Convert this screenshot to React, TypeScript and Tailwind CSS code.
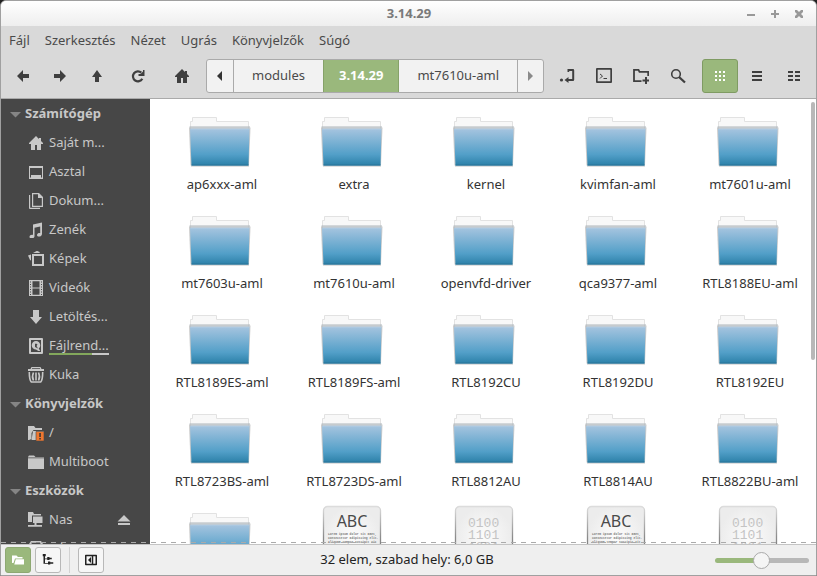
import { useState, ReactNode } from "react";

type IconProps = {
  children: ReactNode;
  className?: string;
}

const Icon = ({ children, className = "size-4" }: IconProps) => (
  <svg viewBox="0 0 16 16" fill="currentColor" className={`${className} shrink-0`} aria-hidden="true">
    {children}
  </svg>
)

const MENU = ["Fájl", "Szerkesztés", "Nézet", "Ugrás", "Könyvjelzők", "Súgó"]

const FOLDERS = [
  "ap6xxx-aml", "extra", "kernel", "kvimfan-aml", "mt7601u-aml",
  "mt7603u-aml", "mt7610u-aml", "openvfd-driver", "qca9377-aml", "RTL8188EU-aml",
  "RTL8189ES-aml", "RTL8189FS-aml", "RTL8192CU", "RTL8192DU", "RTL8192EU",
  "RTL8723BS-aml", "RTL8723DS-aml", "RTL8812AU", "RTL8814AU", "RTL8822BU-aml",
]

const HomeIcon = () => (
  <Icon>
    <path d="M8 1 1 8v1h2v6h4v-5h2v5h4V9h2V8l-2-2V3h-2v1z" />
  </Icon>
)

const DesktopIcon = () => (
  <Icon>
    <path fillRule="evenodd" d="M1 2h14v13H1zM2 4v9.500h1V11h10v2.500h1V4z" />
  </Icon>
)

const DocumentsIcon = () => (
  <Icon>
    <path fillRule="evenodd" d="M4 0h7l4 4v10H4zM5.200 1.200v11.600h8.600V5H10V1.200z" />
    <path d="M1 2h1.200v12.800H12V16H2q-1 0-1-1z" />
  </Icon>
)

const MusicIcon = () => (
  <Icon>
    <path d="M5 2.500 14 .5V12c0 3-5 3.500-5 1 0-1.800 2-2.300 3.200-2V4.500L6.500 5.700V14c0 3-5 3.200-5 1 0-1.800 2-2.500 3.500-2z" />
  </Icon>
)

const PicturesIcon = () => (
  <Icon>
    <path fillRule="evenodd" d="M4 3h12v12H4zM6 5v8h8V5z" />
    <path d="M5 2h7l-1-1.500h-1L9.500-.5zM0 4.500l3-1v6L2 9z" />
  </Icon>
)

const VideosIcon = () => (
  <Icon>
    <path fillRule="evenodd" d="M1 0h14v16H1zM4.500 1.200v6.200h7V1.200zM4.500 8.600v6.200h7V8.600zM2 1.500v1h1v-1zM2 4v1h1V4zM2 6.500v1h1v-1zM2 9v1h1V9zM2 11.500v1h1v-1zM2 14v1h1v-1zM13 1.500v1h1v-1zM13 4v1h1V4zM13 6.500v1h1v-1zM13 9v1h1V9zM13 11.500v1h1v-1zM13 14v1h1v-1z" />
  </Icon>
)

const DownloadsIcon = () => (
  <Icon>
    <path d="M5 1h6v7h3l-6 7-6-7h3z" />
  </Icon>
)

const DiskIcon = () => (
  <Icon>
    <path fillRule="evenodd" d="M2 0h12q1 0 1 1v14q0 1-1 1H2q-1 0-1-1V1q0-1 1-1zM3 2v12h10V2z" />
    <path fillRule="evenodd" d="M8 3a4.300 4.300 0 0 1 4.300 4.300c0 1.500-.6 2.500-1.600 3.200l1.600 2.500h-2L8 11.600A4.300 4.300 0 1 1 8 3zM7 6v3l3 1.500L8.500 8 9.500 6.500 8 5.500z" />
  </Icon>
)

const TrashIcon = () => (
  <Icon>
    <path fillRule="evenodd" d="M3.500 0h9l1 2H16v2H0V2h2.500zM4 1.300V2h8v-.7z" />
    <path fill="none" stroke="currentColor" strokeWidth="1.600" d="M1.300 5q0 8 2 10h9.400q2-2 2-10M5.500 5.500q-2 4 0 8M8 5.500v8M10.500 5.500q2 4 0 8" />
  </Icon>
)

const BadFolderIcon = () => (
  <Icon>
    <path d="M0 1h6l1.500 2H14v2H5.500L3.500 8v6L1 15H0z" />
    <path d="M5 6h11v9H3.500z" />
    <path fill="#f0772f" stroke="#474747" strokeWidth=".6" d="M8 6.500h8V16H8z" />
    <path fill="#333" d="M11.300 8h1.500v4h-1.500zM11.300 13h1.500v1.500h-1.500z" />
  </Icon>
)

const FolderIcon = () => (
  <Icon>
    <path d="M0 4.200h16V15H0zM0 3l1-1.500h5L7.500 3H16v.6H0z" />
  </Icon>
)

const NetworkIcon = () => (
  <Icon>
    <path d="M0 0h5l1 2h7v1.500H4V10H0zM5 4.500h9.500V11H8.500v2H14v1.800H0V13h6.500v-2H5z" />
  </Icon>
)

const DriveIcon = () => (
  <Icon>
    <path fillRule="evenodd" d="M3 0h10l2 3v13H1V3zM4 1.500 3 4v10h10V4l-1-2.500zM5 3h1v2H5zM7.500 3h1v2h-1zM10 3h1v2h-1z" />
  </Icon>
)

const PLACES = [
  {
    title: "Számítógép",
    items: [
      { label: "Saját m...", icon: <HomeIcon /> },
      { label: "Asztal", icon: <DesktopIcon /> },
      { label: "Dokum...", icon: <DocumentsIcon /> },
      { label: "Zenék", icon: <MusicIcon /> },
      { label: "Képek", icon: <PicturesIcon /> },
      { label: "Videók", icon: <VideosIcon /> },
      { label: "Letöltés...", icon: <DownloadsIcon /> },
      { label: "Fájlrend...", icon: <DiskIcon />, usage: 72 },
      { label: "Kuka", icon: <TrashIcon /> },
    ],
  },
  {
    title: "Könyvjelzők",
    items: [
      { label: "/", icon: <BadFolderIcon /> },
      { label: "Multiboot", icon: <FolderIcon /> },
    ],
  },
  {
    title: "Eszközök",
    items: [
      { label: "Nas", icon: <NetworkIcon />, eject: true },
      { label: "sda1", icon: <DriveIcon /> },
    ],
  },
]

const ToolButton = ({ label, active, children }: { label: string, active?: boolean, children: ReactNode }) => (
  <button
    type="button"
    aria-label={label}
    className={`flex h-[34px] w-9 items-center justify-center rounded-[3px] border ${active ? "border-[#7f9b63] bg-[#9ab87c] text-white" : "border-transparent"}`}
  >
    {children}
  </button>
)

const FolderPicture = () => (
  <svg viewBox="0 0 64 64" className="size-16" aria-hidden="true">
    <defs>
      <linearGradient id="folder" x1="0" y1="0" x2="0" y2="1">
        <stop offset="0" stopColor="#a5c4df" />
        <stop offset=".7" stopColor="#529fc8" />
        <stop offset="1" stopColor="#2b80a8" />
      </linearGradient>
    </defs>
    <path d="M3 56.500h58V58H3z" fill="#000" opacity=".12" />
    <path d="M2.500 22V12.500h2v-4h24v4h32V22z" fill="#f8f8f8" stroke="#e2e2e2" />
    <path d="M1 18.500h61.500l-1.500 38H2.500z" fill="#a9a9a9" opacity=".6" />
    <path d="M2 20h59.500l-1 36.500h-57z" fill="url(#folder)" />
    <path d="M1.500 18h60.500" stroke="#aeb7bd" />
    <path d="M2.500 20h59" stroke="#b4cee4" />
    <path d="M3.500 56h57" stroke="#2a7599" />
  </svg>
)

const FilePicture = ({ binary }: { binary?: boolean }) => (
  <svg viewBox="0 0 64 64" className="size-16" aria-hidden="true">
    <defs>
      <radialGradient id="paper">
        <stop offset="0" stopColor="#fcfcfc" />
        <stop offset="1" stopColor="#ececec" />
      </radialGradient>
      <linearGradient id="edge" x1="0" y1="0" x2="0" y2="1">
        <stop offset="0" stopColor="#dcdcdc" />
        <stop offset=".5" stopColor="#8c8c8c" />
        <stop offset="1" stopColor="#666" />
      </linearGradient>
    </defs>
    <rect x="3.500" y="1.500" width="57" height="61" rx="4" fill="url(#paper)" stroke="url(#edge)" strokeWidth="1.300" />
    {binary ? (
      <g fill="#c4c4c4" fontFamily="'Liberation Mono', monospace" fontSize="13">
        <text x="16" y="22">0100</text>
        <text x="16" y="34">1101</text>
        <text x="16" y="46">1001</text>
      </g>
    ) : (
      <>
        <text x="32" y="22" textAnchor="middle" fill="#4a4a4a" fontFamily="'Noto Sans', sans-serif" fontSize="16">ABC</text>
        <g fill="#777" fontFamily="'Liberation Mono', monospace" fontSize="3" fontWeight="bold">
          <text x="8" y="30">Lorem ipsum dolor sit amet,</text>
          <text x="8" y="34">consectetur adipiscing elit.</text>
          <text x="8" y="38">Aliquam tempor suscipit sit</text>
        </g>
      </>
    )}
  </svg>
)

const Item = ({ name, children }: { name?: string, children: ReactNode }) => (
  <li className="flex h-[99px] flex-col items-center gap-px">
    {children}
    {name && <span className="pl-1 leading-5 text-[#333]">{name}</span>}
  </li>
)

const Sidebar = () => (
  <aside className="w-[149px] shrink-0 overflow-hidden bg-[#474747] text-[#c8c8c8]">
    {PLACES.map(({ title, items }) => (
      <section key={title}>
        <h2 className="flex h-[29px] items-center gap-1 pl-[9px] font-bold">
          <Icon className="h-4 w-[11px]">
            <path d="M0 5h16L8 13z" fill="#858585" />
          </Icon>
          {title}
        </h2>
        <ul>
          {items.map(({ label, icon, usage, eject }: { label: string, icon: ReactNode, usage?: number, eject?: boolean }) => (
            <li key={label} className="flex h-[29px] items-center gap-[5px] pr-[18px] pl-[27px]">
              {icon}
              <a href="#" className="relative w-[60px] whitespace-nowrap">
                {label}
                {usage && (
                  <span className="absolute inset-x-0 bottom-0 h-[2px] bg-[#c8c8c8]">
                    <span className="block h-full bg-[#83a85c]" style={{ width: `${usage}%` }} />
                  </span>
                )}
              </a>
              {eject && (
                <button type="button" aria-label="Leválasztás" className="ml-auto">
                  <Icon><path d="M8 3l6.500 6.500h-13zM2 11h12v2H2z" /></Icon>
                </button>
              )}
            </li>
          ))}
        </ul>
      </section>
    ))}
  </aside>
)

const StatusButton = ({ label, active, children }: { label: string, active?: boolean, children: ReactNode }) => (
  <button
    type="button"
    aria-label={label}
    className={`flex size-[26px] items-center justify-center rounded-[3px] border ${active ? "border-[#8da872] bg-[#9ab87c] text-white" : "border-[#b8b8b8] bg-[#f6f6f6] text-[#222]"}`}
  >
    {children}
  </button>
)

const App = () => {

  const [zoom, setZoom] = useState(49)

  return (
    <div className="h-screen bg-[#222]">
      <div className="flex h-full flex-col overflow-hidden rounded-t-[6px] border border-[#a0a0a0] bg-[#d9d9d9] font-['Noto_Sans',sans-serif] text-[13px] text-[#4a4a4a]">

        <header className="flex h-[25px] shrink-0 items-center bg-linear-to-b from-white to-[#eeeeee] pr-[9px] pl-2">
          <h1 className="flex-1 pt-px pl-[66px] text-center font-bold text-[#7a7a7a]">3.14.29</h1>
          <div className="flex gap-2 text-[#999]">
            <button type="button" aria-label="Minimalizálás"><Icon><path d="M4 8h8v2H4z" /></Icon></button>
            <button type="button" aria-label="Maximalizálás"><Icon><path d="M7 4h2v3h3v2H9v3H7V9H4V7h3z" /></Icon></button>
            <button type="button" aria-label="Bezárás"><Icon><path d="M4 4h2l2 2 2-2h2v2l-2 2 2 2v2h-2l-2-2-2 2H4v-2l2-2-2-2z" /></Icon></button>
          </div>
        </header>

        <nav className="flex h-[29px] shrink-0 items-center gap-[15px] px-2">
          {MENU.map((entry) => (
            <button key={entry} type="button">{entry}</button>
          ))}
        </nav>

        <div className="flex h-11 shrink-0 items-start border-b border-[#aaa] px-1 pt-1 text-[#3f3f3f]">
          <div className="flex gap-px">
            <ToolButton label="Vissza"><Icon><path d="M8 2v4h6v4H8v4L2 8z" /></Icon></ToolButton>
            <ToolButton label="Előre"><Icon><path d="M8 2v4H2v4h6v4l6-6z" /></Icon></ToolButton>
            <ToolButton label="Fel"><Icon><path d="M8 2l5 7h-3v5H6V9H3z" /></Icon></ToolButton>
          </div>
          <div className="ml-[5px] flex gap-2">
            <ToolButton label="Frissítés">
              <Icon>
                <path fill="none" stroke="currentColor" strokeWidth="2.200" d="M11.300 4.600A5 5 0 1 0 12.300 10.800" />
                <path d="M14.500 2v6h-6V6h2L13 3.500V2z" />
              </Icon>
            </ToolButton>
            <ToolButton label="Saját mappa"><HomeIcon /></ToolButton>
          </div>

          <div className="ml-[6px] flex h-[34px] overflow-hidden rounded-[3px] border border-[#aaa] bg-[#f2f2f2] text-[#4a4a4a]">
            <button type="button" aria-label="Előző" className="w-[27px] border-r border-[#aaa] pl-[5px] text-[#333]">
              <Icon><path d="M10 3v10L5 8z" /></Icon>
            </button>
            <button type="button" className="px-[18px]">modules</button>
            <button type="button" className="border-x border-[#86a269] bg-[#9ab87c] px-[15px] font-bold text-white">3.14.29</button>
            <button type="button" className="px-[18px]">mt7610u-aml</button>
            <button type="button" aria-label="Következő" className="w-[26px] border-l border-[#aaa] pl-1 text-[#8a8a8a]">
              <Icon><path d="M6 3v10l5-5z" /></Icon>
            </button>
          </div>

          <div className="ml-auto flex gap-px">
            <ToolButton label="Hely megadása">
              <Icon>
                <path d="M8.500 1H14q1.200 0 1.200 1.200v9.600q0 1.200-1.200 1.200H9.500v2L5.500 12l4-3v2h3.700V3h-3v1H8.500z" />
                <circle cx="2.500" cy="12" r="1.600" />
              </Icon>
            </ToolButton>
            <ToolButton label="Terminál">
              <Icon>
                <path fillRule="evenodd" d="M1 0h14q1 0 1 1v13q0 1-1 1H1q-1 0-1-1V1q0-1 1-1zM1.700 1.700v11.600h12.600V1.700z" />
                <path fill="none" stroke="currentColor" d="M4 6l2.500 2L4 10.500M7.500 10.500h3.500" />
              </Icon>
            </ToolButton>
            <ToolButton label="Új mappa">
              <Icon>
                <path fill="none" stroke="currentColor" strokeWidth="1.800" d="M8.500 13.200H1V1.800h4.500l1 2h8.700V8" />
                <path d="M12 9h2v2.500h2.500v2H14V16h-2v-2.500H9.500v-2H12z" />
              </Icon>
            </ToolButton>
            <ToolButton label="Keresés">
              <Icon>
                <circle cx="6" cy="6" r="4.300" fill="none" stroke="currentColor" strokeWidth="1.600" />
                <path fill="none" stroke="currentColor" strokeWidth="2.300" d="M9 9l6 5.500" />
              </Icon>
            </ToolButton>
          </div>
          <div className="ml-[6px] flex gap-px">
            <ToolButton label="Ikonnézet" active>
              <Icon>
                <path d="M3 3h2v2H3zM7 3h2v2H7zM11 3h2v2h-2zM3 7h2v2H3zM7 7h2v2H7zM11 7h2v2h-2zM3 11h2v2H3zM7 11h2v2H7zM11 11h2v2h-2z" />
              </Icon>
            </ToolButton>
            <ToolButton label="Listanézet">
              <Icon><path d="M3 3h10v2H3zM3 7h10v2H3zM3 11h10v2H3z" /></Icon>
            </ToolButton>
            <ToolButton label="Tömör nézet">
              <Icon>
                <path d="M2 3h5v2H2zM9 3h5v2H9zM2 7h5v2H2zM9 7h5v2H9zM2 11h5v2H2zM9 11h5v2H9z" />
              </Icon>
            </ToolButton>
          </div>
        </div>

        <div className="relative flex min-h-0 flex-1">
          <Sidebar />
          <main className="relative flex-1 overflow-hidden bg-white">
            <ul className="grid grid-cols-[repeat(auto-fill,132px)] pt-[10px] pl-1">
              {FOLDERS.map((name) => (
                <Item key={name} name={name}><FolderPicture /></Item>
              ))}
              <Item><FolderPicture /></Item>
              <Item><FilePicture /></Item>
              <Item><FilePicture binary /></Item>
              <Item><FilePicture /></Item>
              <Item><FilePicture binary /></Item>
            </ul>
            <div className="absolute top-[3px] right-px h-[58%] w-1 rounded-full bg-[#b8b8b8]" />
          </main>
          <div className="absolute inset-x-0 bottom-px h-px bg-[repeating-linear-gradient(to_right,#aaa_0_5px,transparent_5px_10px)]" />
        </div>

        <footer className="flex h-[31px] shrink-0 items-center border-t border-[#c4c4c4] bg-[#efefef] pr-[3px] pl-1 text-[#222]">
          <div className="flex flex-1 items-center gap-1">
            <StatusButton label="Helyek" active>
              <Icon className="size-3"><path d="M0 2h6l2 2h6v2H4L2 12H0zM5 7h11v7H3z" /></Icon>
            </StatusButton>
            <StatusButton label="Fanézet">
              <Icon className="size-3"><path d="M1 0h4v3H4v3h3V4h3v1h3v2h-3v1H7V7H4v5h4v-2h3v1h4v2h-4v1H8v-1H2V3H1z" /></Icon>
            </StatusButton>
            <span className="mx-1 h-[26px] w-px bg-[#d2d2d2]" />
            <StatusButton label="Oldalsáv">
              <Icon className="size-3">
                <path fillRule="evenodd" d="M1 1h14q1 0 1 1v12q0 1-1 1H1q-1 0-1-1V2q0-1 1-1zM2 3v10h7V3zM11 3v10h3V3z" />
                <path d="M8 4v8L4 8z" />
              </Icon>
            </StatusButton>
          </div>
          <p>32 elem, szabad hely: 6,0 GB</p>
          <div className="flex flex-1 justify-end pr-1">
            <input
              type="range"
              aria-label="Nagyítás"
              value={zoom}
              onChange={(e) => setZoom(Number(e.target.value))}
              style={{ backgroundImage: `linear-gradient(to right, #9ab87c ${zoom}%, #b8b8b8 ${zoom}%)` }}
              className="h-[5px] w-[94px] appearance-none rounded-full [&::-webkit-slider-thumb]:size-[17px] [&::-webkit-slider-thumb]:appearance-none [&::-webkit-slider-thumb]:rounded-full [&::-webkit-slider-thumb]:border [&::-webkit-slider-thumb]:border-[#aaa] [&::-webkit-slider-thumb]:bg-[#f5f5f5]"
            />
          </div>
        </footer>
      </div>
    </div>
  );
}

export default App
